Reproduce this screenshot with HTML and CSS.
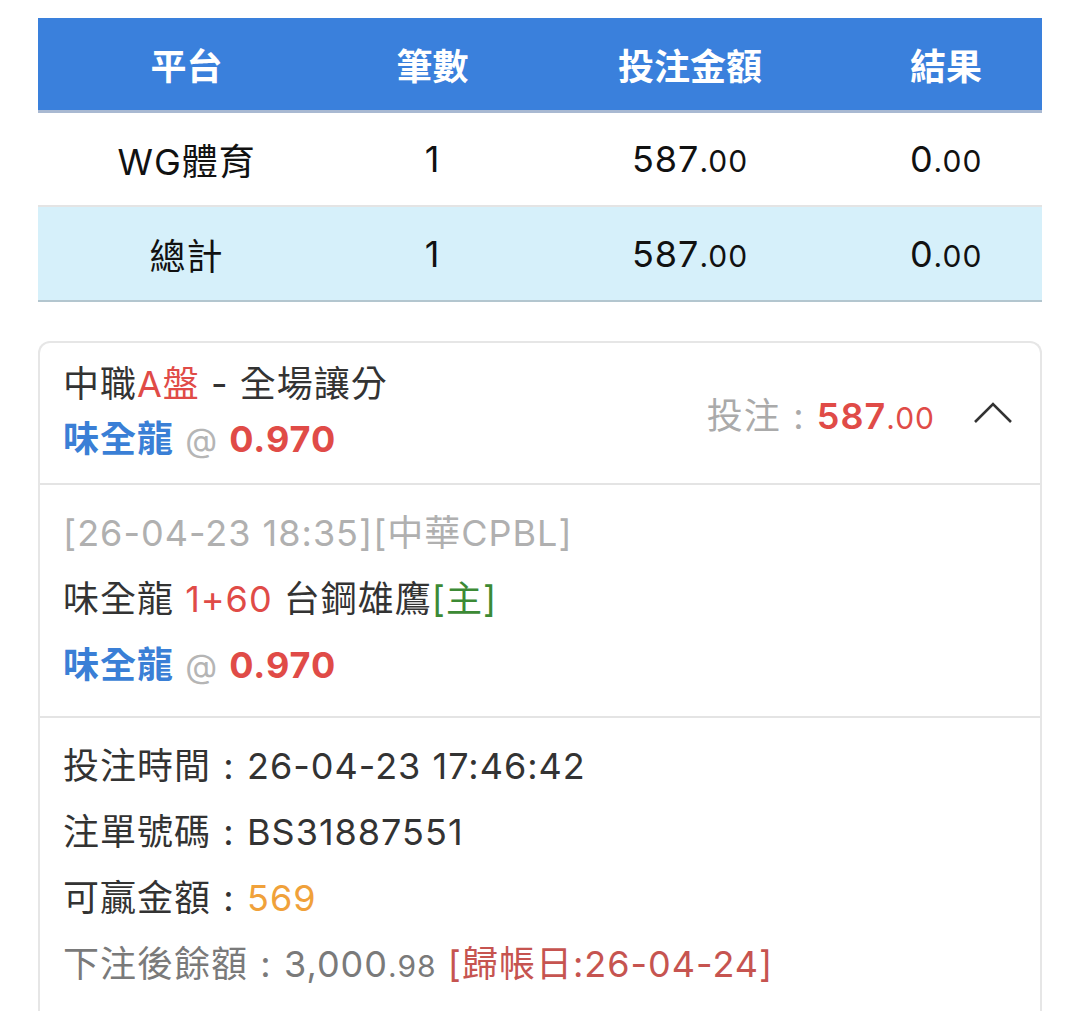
FILE: index.html
```html
<!DOCTYPE html>
<html lang="zh-Hant">
<head>
<meta charset="utf-8" />
<title>投注記錄</title>
<link rel="stylesheet" href="styles.css">
</head>
<body>
	<table class="summary">
		<colgroup>
			<col class="c1"><col class="c2"><col class="c3"><col class="c4">
		</colgroup>
		<thead>
			<tr><th>平台</th><th>筆數</th><th>投注金額</th><th>結果</th></tr>
		</thead>
		<tbody>
			<tr>
				<td>WG體育</td>
				<td>1</td>
				<td>587<span class="dec">.00</span></td>
				<td>0<span class="dec">.00</span></td>
			</tr>
			<tr class="total">
				<td>總計</td>
				<td>1</td>
				<td>587<span class="dec">.00</span></td>
				<td>0<span class="dec">.00</span></td>
			</tr>
		</tbody>
	</table>

	<div class="betCard">
		<div class="betHead">
			<div class="betTitle">
				<p>中職<span class="red">A盤</span> - 全場讓分</p>
				<p><span class="team">味全龍</span> <span class="at">@</span> <span class="odds">0.970</span></p>
			</div>
			<div class="betAmount">
				投注<span class="colon">:</span><span class="amt">587</span><span class="amtDec">.00</span>
			</div>
			<svg class="chevron" width="40" height="24" viewBox="0 0 40 24">
				<path d="M2 21 L20 3 L38 21" fill="none" stroke="#333" stroke-width="2.6" />
			</svg>
		</div>

		<div class="betMatch">
			<p class="matchInfo">[26-04-23 18:35][中華CPBL]</p>
			<p>味全龍 <span class="red">1+60</span> 台鋼雄鷹<span class="green">[主]</span></p>
			<p><span class="team">味全龍</span> <span class="at">@</span> <span class="odds">0.970</span></p>
		</div>

		<div class="betDetail">
			<p>投注時間<span class="colon">:</span>26-04-23 17:46:42</p>
			<p>注單號碼<span class="colon">:</span>BS31887551</p>
			<p>可贏金額<span class="colon">:</span><span class="orange">569</span></p>
			<p class="balance">下注後餘額<span class="colon">:</span>3,000<span class="balDec">.98</span> <span class="settle">[歸帳日:26-04-24]</span></p>
		</div>
	</div>
</body>
</html>
```

FILE: styles.css
```css
body {
	margin: 0;
	padding: 18px 38px 0;
	background: #fff;
	color: #333;
	font-family: Inter, "Noto Sans CJK TC", sans-serif;
	font-size: 36px;
	letter-spacing: 1px;
}

p {
	margin: 0;
}

.colon {
	display: inline-block;
	width: 36px;
	text-align: center;
}

.summary {
	width: 100%;
	border-collapse: collapse;
	text-align: center;
	color: #111;
}

.summary col.c1 { width: 29.6%; }
.summary col.c2 { width: 19.4%; }
.summary col.c3 { width: 31.9%; }
.summary col.c4 { width: 19.1%; }

.summary th {
	height: 92px;
	padding: 0;
	background: #3a80dc;
	color: #fff;
	font-weight: bold;
	letter-spacing: 0;
	border-bottom: 3px solid #a9b9d2;
}

.summary td {
	height: 92px;
	padding: 0;
	border-bottom: 2px solid #e4e4e4;
}

.summary tr.total td {
	height: 93px;
	background: #d6f0fa;
	border-bottom: 2px solid #b3c6cf;
}

.summary .dec {
	font-size: 30px;
}

.betCard {
	margin-top: 39px;
	border: 2px solid #e6e6e6;
	border-bottom: none;
	border-radius: 12px 12px 0 0;
}

.betHead {
	display: flex;
	align-items: center;
	padding: 14px 27px 15px 23px;
	border-bottom: 2px solid #e4e4e4;
}

.betTitle {
	flex: 1;
	line-height: 55px;
}

.betAmount {
	color: #aaa;
}

.betAmount .amt {
	color: #e04b47;
	font-weight: 600;
}

.betAmount .amtDec {
	color: #e04b47;
	font-size: 30px;
}

.chevron {
	margin-left: 38px;
}

.red {
	color: #e04b47;
}

.green {
	color: #3c8a35;
}

.orange {
	color: #f0a13a;
}

.team {
	color: #3a7fd6;
	font-weight: bold;
}

.at {
	color: #b5b5b5;
	font-size: 33px;
}

.odds {
	color: #e04b47;
	font-weight: bold;
}

.betMatch {
	padding: 15px 23px 17px;
	line-height: 66px;
	border-bottom: 2px solid #e4e4e4;
}

.matchInfo {
	color: #b0b0b0;
}

.betDetail {
	padding: 15px 23px 20px;
	line-height: 66px;
}

.balance {
	color: #7a7a7a;
}

.balance .balDec {
	font-size: 30px;
}

.settle {
	color: #c65450;
}
```
